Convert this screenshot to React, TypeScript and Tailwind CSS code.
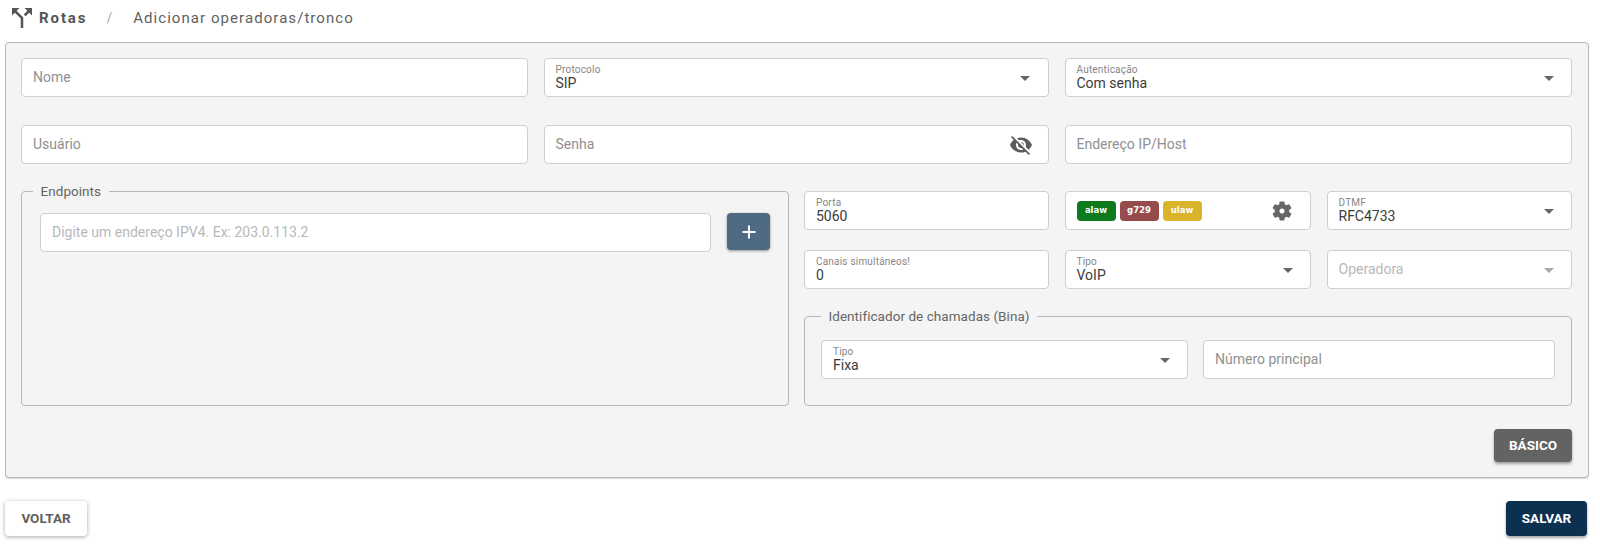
import React from "react";

const font = { fontFamily: "Roboto, 'Liberation Sans', sans-serif" };
const chipFont = { fontFamily: "'DejaVu Sans', sans-serif" };

function Caret({ light }: { light?: boolean }) {
  return (
    <span
      className={`mt-[1px] h-0 w-0 border-x-[5px] border-t-[5px] border-x-transparent ${
        light ? "border-t-[#a8a8a8]" : "border-t-[#666666]"
      }`}
    />
  );
}

function Box({
  children,
  className = "",
}: {
  children?: React.ReactNode;
  className?: string;
}) {
  return (
    <div
      className={`flex h-[39px] min-w-0 items-center justify-between rounded border border-[#cfcfcf] bg-white pl-[11px] pr-[17.5px] ${className}`}
    >
      {children}
    </div>
  );
}

function Placeholder({ text, light }: { text: string; light?: boolean }) {
  return (
    <span className={`text-[14px] ${light ? "text-[#b8b8b8]" : "text-[#909090]"}`}>
      {text}
    </span>
  );
}

function Filled({ label, value }: { label: string; value: string }) {
  return (
    <div className="flex flex-col pb-[1px]">
      <span className="text-[10px] leading-[11px] tracking-[0.2px] text-[#868686]">
        {label}
      </span>
      <span className="text-[14px] leading-[16px] text-[#3c3c3c]">{value}</span>
    </div>
  );
}

function Group({
  title,
  titleClass,
  className = "",
  children,
}: {
  title: string;
  titleClass: string;
  className?: string;
  children: React.ReactNode;
}) {
  return (
    <div className={`relative rounded border border-[#b8b8b8] ${className}`}>
      <span
        className={`absolute top-[-9px] bg-[#f4f4f4] px-[7.5px] text-[13.5px] leading-[16px] tracking-[0.05px] text-[#666666] ${titleClass}`}
      >
        {title}
      </span>
      {children}
    </div>
  );
}

function Chip({ text, color }: { text: string; color: string }) {
  return (
    <span
      style={chipFont}
      className={`flex h-[20px] w-[39px] items-center justify-center rounded text-[8.5px] font-bold text-white ${color}`}
    >
      {text}
    </span>
  );
}

export default function App() {
  return (
    <div style={font} className="flex h-[547px] w-[1600px] flex-col bg-white">
      <header className="flex h-[42px] items-center pb-[6px] pl-[7px]">
        <svg viewBox="0 0 24 24" className="h-[30px] w-[30px] fill-[#555555]">
          <path d="M14 4l2.29 2.29-2.88 2.88 1.42 1.42 2.88-2.88L20 10V4zm-4 0H4v6l2.29-2.29 4.71 4.7V20h2v-8.41l-5.29-5.3z" />
        </svg>
        <span className="ml-[2px] text-[15px] font-bold tracking-[1.9px] text-[#555555]">
          Rotas
        </span>
        <span className="ml-[19px] text-[14px] text-[#aaaaaa]">/</span>
        <span className="ml-[21px] text-[15px] tracking-[1.06px] text-[#5f5f5f]">
          Adicionar operadoras/tronco
        </span>
      </header>

      <main className="mx-[5px] flex h-[436px] w-[1584px] flex-col rounded border border-[#b8b8b8] bg-[#f4f4f4] pl-[15px] pr-[16px] pt-[15px] shadow-[0_1px_1px_rgba(0,0,0,0.15)]">
        <div className="grid grid-cols-[506.5px_505px_1fr] gap-x-[16px] gap-y-[28px]">
          <Box>
            <Placeholder text="Nome" />
          </Box>
          <Box>
            <Filled label="Protocolo" value="SIP" />
            <Caret />
          </Box>
          <Box>
            <Filled label="Autenticação" value="Com senha" />
            <Caret />
          </Box>
          <Box>
            <Placeholder text="Usuário" />
          </Box>
          <Box className="!pr-[15px]">
            <Placeholder text="Senha" />
            <svg viewBox="0 0 24 24" className="h-[24px] w-[24px] fill-[#5c5c5c]">
              <path d="M12 7c2.76 0 5 2.24 5 5 0 .65-.13 1.26-.36 1.83l2.92 2.92c1.51-1.26 2.7-2.89 3.43-4.75-1.73-4.39-6-7.5-11-7.5-1.4 0-2.74.25-3.98.7l2.16 2.16C10.74 7.13 11.35 7 12 7zM2 4.27l2.28 2.28.46.46C3.08 8.3 1.78 10.02 1 12c1.73 4.39 6 7.5 11 7.5 1.55 0 3.03-.3 4.38-.84l.42.42L19.73 22 21 20.73 3.27 3 2 4.27zM7.53 9.8l1.55 1.55c-.05.21-.08.43-.08.65 0 1.66 1.34 3 3 3 .22 0 .44-.03.65-.08l1.55 1.55c-.67.33-1.41.53-2.2.53-2.76 0-5-2.24-5-5 0-.79.2-1.53.53-2.2zm4.31-.78l3.15 3.15.02-.16c0-1.66-1.34-3-3-3l-.17.01z" />
            </svg>
          </Box>
          <Box>
            <Placeholder text="Endereço IP/Host" />
          </Box>
        </div>

        <div className="mt-[27px] grid grid-cols-[768px_1fr] gap-x-[15px]">
          <Group
            title="Endpoints"
            titleClass="left-[11px]"
            className="flex h-[215px] items-start gap-[16px] pl-[18px] pr-[18px] pt-[21px]"
          >
            <Box className="flex-1">
              <Placeholder text="Digite um endereço IPV4. Ex: 203.0.113.2" light />
            </Box>
            <button className="flex h-[37px] w-[43px] items-center justify-center rounded bg-[#4f6a83] shadow-[0_1px_3px_rgba(0,0,0,0.4)]">
              <svg viewBox="0 0 16 16" className="h-[16px] w-[16px] stroke-white stroke-2">
                <path d="M8 1.5v13M1.5 8h13" />
              </svg>
            </button>
          </Group>

          <div className="flex h-[215px] flex-col">
            <div className="grid grid-cols-[245px_246.5px_1fr] gap-x-[15.5px] gap-y-[20px]">
              <Box>
                <Filled label="Porta" value="5060" />
              </Box>
              <Box className="!pr-[16px]">
                <div className="flex gap-[4px]">
                  <Chip text="alaw" color="bg-[#0d7a1e]" />
                  <Chip text="g729" color="bg-[#964c4c]" />
                  <Chip text="ulaw" color="bg-[#d9b42b]" />
                </div>
                <svg viewBox="0 0 24 24" className="h-[24px] w-[24px] fill-[#666666]">
                  <path d="M19.14 12.94c.04-.3.06-.61.06-.94 0-.32-.02-.64-.07-.94l2.03-1.58c.18-.14.23-.41.12-.61l-1.92-3.32c-.12-.22-.37-.29-.59-.22l-2.39.96c-.5-.38-1.03-.7-1.62-.94l-.36-2.54c-.04-.24-.24-.41-.48-.41h-3.84c-.24 0-.43.17-.47.41l-.36 2.54c-.59.24-1.13.57-1.62.94l-2.39-.96c-.22-.08-.47 0-.59.22L2.74 8.87c-.12.21-.08.47.12.61l2.03 1.58c-.05.3-.09.63-.09.94s.02.64.07.94l-2.03 1.58c-.18.14-.23.41-.12.61l1.92 3.32c.12.22.37.29.59.22l2.39-.96c.5.38 1.03.7 1.62.94l.36 2.54c.05.24.24.41.48.41h3.84c.24 0 .44-.17.47-.41l.36-2.54c.59-.24 1.13-.56 1.62-.94l2.39.96c.22.08.47 0 .59-.22l1.92-3.32c.12-.22.07-.47-.12-.61l-2.01-1.58zM12 14.6c-1.43 0-2.6-1.17-2.6-2.6s1.17-2.6 2.6-2.6 2.6 1.17 2.6 2.6-1.17 2.6-2.6 2.6z" />
                </svg>
              </Box>
              <Box>
                <Filled label="DTMF" value="RFC4733" />
                <Caret />
              </Box>
              <Box>
                <Filled label="Canais simultâneos!" value="0" />
              </Box>
              <Box>
                <Filled label="Tipo" value="VoIP" />
                <Caret />
              </Box>
              <Box>
                <Placeholder text="Operadora" light />
                <Caret light />
              </Box>
            </div>
            <Group
              title="Identificador de chamadas (Bina)"
              titleClass="left-[16px]"
              className="mt-[27px] grid flex-1 grid-cols-[367px_1fr] items-start gap-x-[15px] px-[16px] pt-[23px]"
            >
              <Box>
                <Filled label="Tipo" value="Fixa" />
                <Caret />
              </Box>
              <Box>
                <Placeholder text="Número principal" />
              </Box>
            </Group>
          </div>
        </div>

        <div className="mt-[23px] flex justify-end">
          <button className="flex h-[33px] w-[78px] items-center justify-center rounded bg-[#636363] text-[13.5px] font-bold text-white shadow-[0_2px_3px_rgba(0,0,0,0.35)]">
            BÁSICO
          </button>
        </div>
      </main>

      <footer className="mx-[5px] mt-[23px] flex w-[1582px] justify-between">
        <button className="flex h-[35px] w-[82px] items-center justify-center rounded bg-white text-[13.5px] font-bold text-[#606060] shadow-[0_1px_4px_rgba(0,0,0,0.35)]">
          VOLTAR
        </button>
        <button className="flex h-[35px] w-[81px] items-center justify-center rounded bg-[#0c3150] text-[13.5px] font-bold text-white shadow-[0_2px_3px_rgba(0,0,0,0.35)]">
          SALVAR
        </button>
      </footer>
    </div>
  );
}
